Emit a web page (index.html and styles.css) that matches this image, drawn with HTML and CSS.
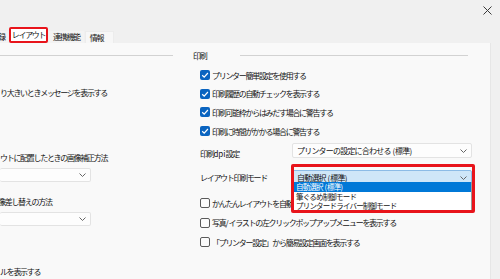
FILE: index.html
```html
<!DOCTYPE html>
<html lang="ja">

<head>
    <meta charset="UTF-8">
    <title>レイアウト設定</title>
    <link rel="stylesheet" href="styles.css">
</head>

<body>

    <div class="window">
        <div class="titlebar">
            <svg class="close" width="9" height="9" viewBox="0 0 9 9">
                <path d="M0.5 0.5 L8.5 8.5 M8.5 0.5 L0.5 8.5" stroke="#3a3a3a" stroke-width="1" fill="none" />
            </svg>
        </div>

        <div class="tabs">
            <span class="tab tab-cut">録</span>
            <span class="tab tab-active">レイアウト</span>
            <span class="tab">連携機能</span>
            <span class="tab tab-box">情報</span>
        </div>

        <div class="main">
            <div class="panel">
                <!-- left column is cut off by the window edge -->
                <div class="col col-left">
                    <div class="section-head"><span class="rule"></span></div>
                    <div class="text t1">り大きいときメッセージを表示する</div>
                    <div class="text t2">ウトに配置したときの画像補正方法</div>
                    <div class="select select-left">
                        <span class="select-value"></span>
                        <svg class="chevron" width="7" height="4" viewBox="0 0 7 4"><path d="M0.5 0.5 L3.5 3.5 L6.5 0.5" stroke="#666" fill="none" /></svg>
                    </div>
                    <div class="text t3">像差し替えの方法</div>
                    <div class="select select-left">
                        <span class="select-value"></span>
                        <svg class="chevron" width="7" height="4" viewBox="0 0 7 4"><path d="M0.5 0.5 L3.5 3.5 L6.5 0.5" stroke="#666" fill="none" /></svg>
                    </div>
                    <div class="text t4">ルを表示する</div>
                </div>

                <div class="col col-right">
                    <div class="section-head">
                        <span class="section-title">印刷</span>
                        <span class="rule"></span>
                    </div>

                    <div class="check-row">
                        <span class="box checked"><svg width="10" height="10" viewBox="0 0 10 10"><path d="M2.2 5.2 L4.2 7.1 L7.9 3" stroke="#fff" stroke-width="1.2" fill="none" /></svg></span>
                        <span class="label">プリンター簡単設定を使用する</span>
                    </div>
                    <div class="check-row">
                        <span class="box checked"><svg width="10" height="10" viewBox="0 0 10 10"><path d="M2.2 5.2 L4.2 7.1 L7.9 3" stroke="#fff" stroke-width="1.2" fill="none" /></svg></span>
                        <span class="label">印刷履歴の自動チェックを表示する</span>
                    </div>
                    <div class="check-row">
                        <span class="box checked"><svg width="10" height="10" viewBox="0 0 10 10"><path d="M2.2 5.2 L4.2 7.1 L7.9 3" stroke="#fff" stroke-width="1.2" fill="none" /></svg></span>
                        <span class="label">印刷可能枠からはみだす場合に警告する</span>
                    </div>
                    <div class="check-row">
                        <span class="box checked"><svg width="10" height="10" viewBox="0 0 10 10"><path d="M2.2 5.2 L4.2 7.1 L7.9 3" stroke="#fff" stroke-width="1.2" fill="none" /></svg></span>
                        <span class="label">印刷に時間がかかる場合に警告する</span>
                    </div>

                    <div class="select-row">
                        <span class="row-label">印刷<span class="latin">dpi</span>設定</span>
                        <div class="select">
                            <span class="select-value">プリンターの設定に合わせる<span class="latin"> (</span>標準<span class="latin">)</span></span>
                            <svg class="chevron" width="7" height="4" viewBox="0 0 7 4"><path d="M0.5 0.5 L3.5 3.5 L6.5 0.5" stroke="#666" fill="none" /></svg>
                        </div>
                    </div>

                    <div class="select-row">
                        <span class="row-label">レイアウト印刷モード</span>
                        <div class="combo">
                            <div class="select select-open">
                                <span class="select-value">自動選択<span class="latin"> (</span>標準<span class="latin">)</span></span>
                                <svg class="chevron" width="7" height="4" viewBox="0 0 7 4"><path d="M0.5 0.5 L3.5 3.5 L6.5 0.5" stroke="#666" fill="none" /></svg>
                            </div>
                            <ul class="dropdown">
                                <li class="selected">自動選択<span class="latin"> (</span>標準<span class="latin">)</span></li>
                                <li>筆ぐるめ制御モード</li>
                                <li>プリンタードライバー制御モード</li>
                            </ul>
                            <span class="highlight"></span>
                        </div>
                    </div>

                    <div class="check-group">
                        <div class="check-row">
                            <span class="box"></span>
                            <span class="label">かんたんレイアウトを自動表示する</span>
                        </div>
                        <div class="check-row">
                            <span class="box"></span>
                            <span class="label">写真<span class="latin">/</span>イラストの左クリックポップアップメニューを表示する</span>
                        </div>
                        <div class="check-row">
                            <span class="box"></span>
                            <span class="label">「プリンター設定」から簡易設定画面を表示する</span>
                        </div>
                    </div>
                </div>
            </div>
            <div class="strip"></div>
        </div>
    </div>

</body>

</html>
```

FILE: styles.css
```css
body {
    margin: 0;
    background: #f0f0f0;
    font-family: "Noto Sans CJK JP", "Noto Sans", sans-serif;
    font-size: 8px;
    letter-spacing: -1.3px;
    color: #141414;
}

.latin {
    letter-spacing: 0;
}

.window {
    width: 500px;
    height: 279px;
    overflow: hidden;
    display: flex;
    flex-direction: column;
}

.titlebar {
    height: 27px;
    flex: none;
    display: flex;
    justify-content: flex-end;
    align-items: flex-start;
}

.close {
    margin: 6px 8px 0 0;
}

/* tab strip */
.tabs {
    height: 16px;
    flex: none;
    display: flex;
    align-items: flex-end;
    gap: 1px;
}

.tab {
    height: 12px;
    line-height: 12px;
    padding: 0 4px;
    background: #f3f3f3;
    white-space: nowrap;
}

.tab-cut {
    width: 8px;
    padding: 0;
    overflow: hidden;
    text-indent: -2px;
}

.tab-active {
    box-sizing: border-box;
    height: 16px;
    width: 39px;
    line-height: 12px;
    padding: 0;
    text-align: center;
    background: #fff;
    border: 2px solid #e8141b;
    border-radius: 2px;
}

.tab-box {
    width: 19px;
    background: #f7f7f7;
    border: 1px solid #ececec;
    border-bottom: none;
    height: 11px;
}

/* content */
.main {
    flex: 1;
    display: flex;
}

.panel {
    width: 490px;
    background: #f9f9f9;
    display: flex;
}

.strip {
    flex: 1;
    background: #f0f0f0;
    border-left: 1px solid #e6e6e6;
}

.col-left {
    width: 173px;
    flex: none;
    display: flex;
    flex-direction: column;
}

.col-right {
    width: 279px;
    margin-left: 20px;
    display: flex;
    flex-direction: column;
}

.section-head {
    height: 23px;
    flex: none;
    display: flex;
    align-items: center;
    padding-top: 1px;
    box-sizing: border-box;
}

.section-title {
    width: 47px;
    flex: none;
}

.rule {
    flex: 1;
    height: 1px;
    background: #d2d2d2;
}

.col-right .rule {
    margin-right: 4px;
}

.text {
    height: 10px;
    line-height: 10px;
    white-space: nowrap;
}

.t1 {
    margin-top: 22px;
}

.t2 {
    margin-top: 55px;
}

.t3 {
    margin-top: 15px;
    text-indent: -2px;
}

.t4 {
    margin-top: 41px;
}

/* selects */
.select {
    box-sizing: border-box;
    height: 15px;
    width: 180px;
    background: #fdfdfd;
    border: 1px solid #e3e3e3;
    border-radius: 2px;
    display: flex;
    align-items: center;
    padding: 0 4px 0 4px;
}

.select-left {
    width: 91px;
    height: 14px;
    margin-top: 5px;
    border-left: none;
}

.select-value {
    flex: 1;
    line-height: 10px;
    letter-spacing: -0.8px;
    white-space: nowrap;
}

.chevron {
    flex: none;
}

.check-row {
    height: 18.6px;
    display: flex;
    align-items: center;
    padding-left: 7px;
}

.box {
    box-sizing: border-box;
    width: 10px;
    height: 10px;
    flex: none;
    margin-right: 2px;
    border: 1px solid #5a5a5a;
    border-radius: 2px;
    background: #fbfbfb;
}

.box.checked {
    border: none;
    background: #0a64c0;
}

.box svg {
    display: block;
}

.label {
    white-space: nowrap;
}

.select-row {
    height: 24px;
    flex: none;
    display: flex;
    align-items: flex-start;
    padding-left: 7px;
}

.row-label {
    width: 92px;
    flex: none;
    margin-top: 9px;
    line-height: 10px;
    white-space: nowrap;
}

.select-row .select,
.combo {
    margin-top: 3px;
}

.combo {
    position: relative;
    width: 180px;
    z-index: 2;
}

.select-open {
    background: #cfe6f8;
    border-color: #8cbbe6;
}

.dropdown {
    position: absolute;
    left: 0;
    right: 0;
    top: 15px;
    margin: 0;
    padding: 0;
    list-style: none;
    background: #fff;
    border: 1px solid #9a9a9a;
    border-top: none;
}

.dropdown li {
    height: 9.3px;
    line-height: 9.3px;
    padding-left: 3px;
    font-size: 7.5px;
    letter-spacing: -0.8px;
    white-space: nowrap;
}

.dropdown li.selected {
    background: #0078d7;
    color: #fff;
}

/* red marker drawn over the open list */
.highlight {
    position: absolute;
    left: -1px;
    top: -3px;
    width: 184px;
    height: 49px;
    box-sizing: border-box;
    border: 3px solid #e8141b;
    border-radius: 2px;
}

.check-group {
    margin-top: 5px;
}

.check-group .check-row {
    height: 19.5px;
}
```
